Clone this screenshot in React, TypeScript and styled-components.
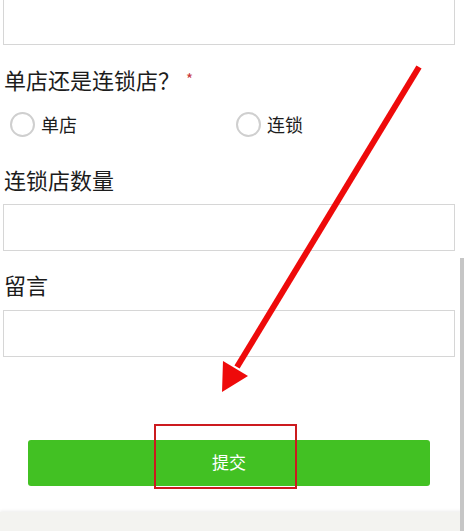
import styled, { createGlobalStyle } from 'styled-components';

const GlobalStyle = createGlobalStyle`
  * {
    box-sizing: border-box;
  }
  body {
    margin: 0;
    background: #fff;
    font-family: 'Noto Sans CJK SC', 'Noto Sans', sans-serif;
    color: #1c1c1c;
  }
`;

const Page = styled.div`
  position: relative;
  width: 464px;
  height: 531px;
  overflow: hidden;
  background: #fff;
`;

const Form = styled.form`
  display: flex;
  flex-direction: column;
  padding: 0 9px 0 3px;
`;

const TextInput = styled.input<{ $top?: number }>`
  display: block;
  width: 100%;
  height: 47px;
  margin-top: ${(p) => p.$top ?? 0}px;
  border: 1px solid #d6d6d6;
  border-radius: 0;
  background: #fff;
  outline: none;
`;

const Label = styled.div<{ $top: number }>`
  margin-top: ${(p) => p.$top}px;
  padding-left: 1px;
  height: 30px;
  line-height: 26px;
  font-size: 22px;
  color: #1c1c1c;
  display: flex;
  align-items: flex-start;
`;

const Required = styled.span`
  color: #c7363a;
  font-size: 15px;
  line-height: 15px;
  margin-left: 6px;
  margin-top: 5px;
`;

const RadioRow = styled.div`
  display: flex;
  margin-top: 13px;
  height: 30px;
`;

const RadioOption = styled.label`
  flex: 1;
  display: flex;
  align-items: center;
  padding-left: 7px;
  font-size: 18px;
  color: #1c1c1c;
`;

const RadioCircle = styled.span`
  width: 25px;
  height: 25px;
  border-radius: 50%;
  border: 2px solid #cfcfcf;
  background: #fff;
  margin-right: 6px;
`;

const SubmitButton = styled.button`
  margin: 83px 0 0 25px;
  width: 402px;
  height: 46px;
  padding: 0 0 4px;
  border: none;
  border-radius: 3px;
  background: #42c123;
  color: #fff;
  font-family: inherit;
  font-size: 17px;
`;

const Footer = styled.div`
  margin-top: 26px;
  height: 30px;
  background: #f3f3f0;
  box-shadow: 0 -1px 3px rgba(0, 0, 0, 0.08);
`;

const Scrollbar = styled.div`
  position: absolute;
  right: 0;
  top: 258px;
  bottom: 0;
  width: 4px;
  background: #c6c6c6;
`;

const HighlightBox = styled.div`
  position: absolute;
  left: 154px;
  top: 424px;
  width: 143px;
  height: 65px;
  border: 2px solid #cc1a1f;
  pointer-events: none;
`;

const ArrowLayer = styled.svg`
  position: absolute;
  left: 0;
  top: 0;
  pointer-events: none;
`;

export default function App() {
  return (
    <Page>
      <GlobalStyle />
      <Form onSubmit={(e) => e.preventDefault()}>
        <TextInput $top={-2} />
        <Label $top={21}>
          单店还是连锁店？<Required>*</Required>
        </Label>
        <RadioRow>
          <RadioOption>
            <RadioCircle />
            单店
          </RadioOption>
          <RadioOption>
            <RadioCircle />
            连锁
          </RadioOption>
        </RadioRow>
        <Label $top={27}>连锁店数量</Label>
        <TextInput $top={8} />
        <Label $top={20}>留言</Label>
        <TextInput $top={9} />
        <SubmitButton type="submit">提交</SubmitButton>
      </Form>
      <Footer />
      <Scrollbar />
      <HighlightBox />
      <ArrowLayer width="464" height="531" viewBox="0 0 464 531">
        <line x1="419" y1="67" x2="237" y2="367" stroke="#ee0a0a" strokeWidth="6" />
        <polygon points="222,392 223,361 248,376" fill="#ee0a0a" />
      </ArrowLayer>
    </Page>
  );
}
